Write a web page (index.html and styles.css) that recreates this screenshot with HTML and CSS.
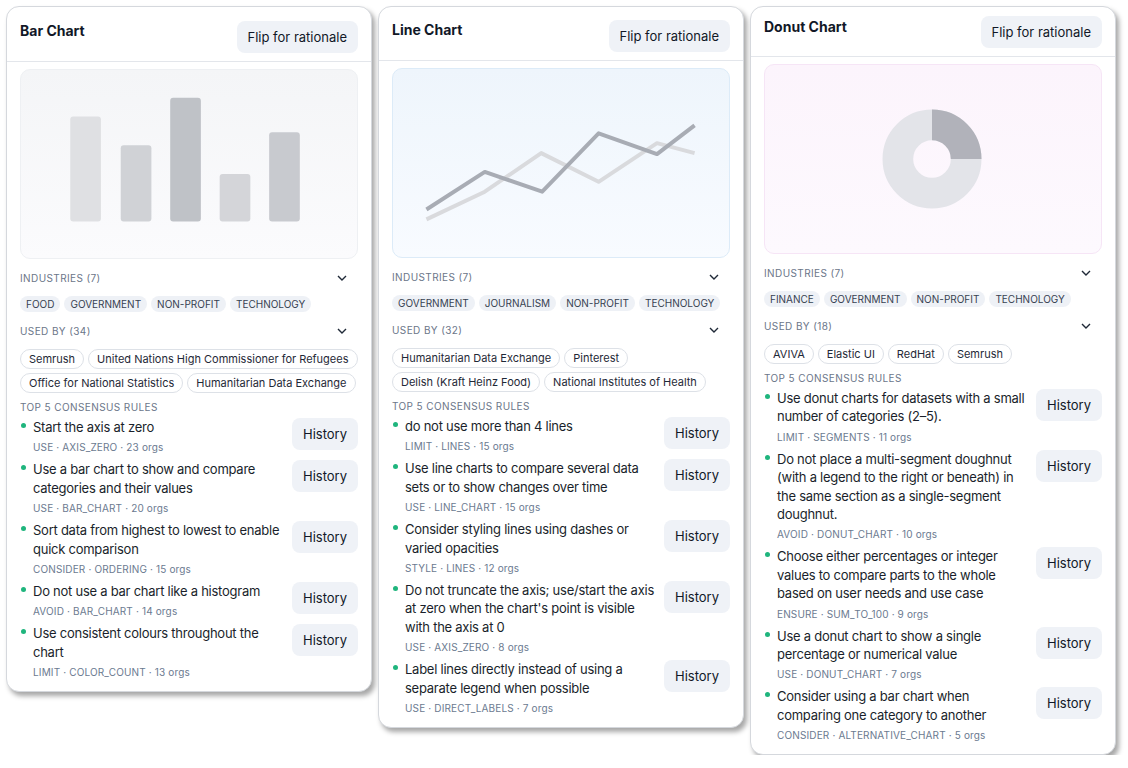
FILE: index.html
```html
<!DOCTYPE html>
<html lang="en">
<head>
    <meta charset="UTF-8">
    <meta name="viewport" content="width=device-width, initial-scale=1.0">
    <title>Chart Guidelines</title>
    <link rel="stylesheet" href="styles.css">
</head>
<body>
    <main class="deck">

        <!-- Bar chart -->
        <article class="card">
            <header class="card-head">
                <h2>Bar Chart</h2>
                <button class="btn-soft">Flip for rationale</button>
            </header>
            <div class="card-body">
                <div class="preview preview-bar">
                    <svg viewBox="0 0 338 190">
                        <rect x="49" y="47" width="31" height="106" rx="3" fill="#dfe0e3"/>
                        <rect x="100" y="76" width="31" height="77" rx="3" fill="#d0d2d6"/>
                        <rect x="150" y="28" width="31" height="125" rx="3" fill="#bfc2c7"/>
                        <rect x="200" y="105" width="31" height="48" rx="3" fill="#d4d5d9"/>
                        <rect x="250" y="63" width="31" height="90" rx="3" fill="#c8cacf"/>
                    </svg>
                </div>

                <div class="section-row">
                    <span class="label">Industries (7)</span>
                    <svg class="chevron" viewBox="0 0 10 6"><path d="M1 1l4 4 4-4"/></svg>
                </div>
                <div class="tags">
                    <span class="tag">Food</span>
                    <span class="tag">Government</span>
                    <span class="tag">Non-profit</span>
                    <span class="tag">Technology</span>
                </div>

                <div class="section-row">
                    <span class="label">Used by (34)</span>
                    <svg class="chevron" viewBox="0 0 10 6"><path d="M1 1l4 4 4-4"/></svg>
                </div>
                <div class="orgs">
                    <span class="org">Semrush</span>
                    <span class="org">United Nations High Commissioner for Refugees</span>
                    <span class="org">Office for National Statistics</span>
                    <span class="org">Humanitarian Data Exchange</span>
                </div>

                <div class="label rules-title">Top 5 consensus rules</div>
                <ul class="rules">
                    <li class="rule">
                        <div class="rule-main">
                            <p class="rule-text">Start the axis at zero</p>
                            <p class="rule-meta">USE · AXIS_ZERO · 23 orgs</p>
                        </div>
                        <button class="btn-soft">History</button>
                    </li>
                    <li class="rule">
                        <div class="rule-main">
                            <p class="rule-text">Use a bar chart to show and compare categories and their values</p>
                            <p class="rule-meta">USE · BAR_CHART · 20 orgs</p>
                        </div>
                        <button class="btn-soft">History</button>
                    </li>
                    <li class="rule">
                        <div class="rule-main">
                            <p class="rule-text">Sort data from highest to lowest to enable quick comparison</p>
                            <p class="rule-meta">CONSIDER · ORDERING · 15 orgs</p>
                        </div>
                        <button class="btn-soft">History</button>
                    </li>
                    <li class="rule">
                        <div class="rule-main">
                            <p class="rule-text">Do not use a bar chart like a histogram</p>
                            <p class="rule-meta">AVOID · BAR_CHART · 14 orgs</p>
                        </div>
                        <button class="btn-soft">History</button>
                    </li>
                    <li class="rule">
                        <div class="rule-main">
                            <p class="rule-text">Use consistent colours throughout the chart</p>
                            <p class="rule-meta">LIMIT · COLOR_COUNT · 13 orgs</p>
                        </div>
                        <button class="btn-soft">History</button>
                    </li>
                </ul>
            </div>
        </article>

        <!-- Line chart -->
        <article class="card">
            <header class="card-head card-head-mid">
                <h2>Line Chart</h2>
                <button class="btn-soft">Flip for rationale</button>
            </header>
            <div class="card-body">
                <div class="preview preview-line">
                    <svg viewBox="0 0 338 190">
                        <polyline class="line-light" points="33,152 92,124 149,85 207,114 266,75 304,85"/>
                        <polyline class="line-dark" points="33,142 92,104 150,124 207,65 266,86 304,57"/>
                    </svg>
                </div>

                <div class="section-row">
                    <span class="label">Industries (7)</span>
                    <svg class="chevron" viewBox="0 0 10 6"><path d="M1 1l4 4 4-4"/></svg>
                </div>
                <div class="tags">
                    <span class="tag">Government</span>
                    <span class="tag">Journalism</span>
                    <span class="tag">Non-profit</span>
                    <span class="tag">Technology</span>
                </div>

                <div class="section-row">
                    <span class="label">Used by (32)</span>
                    <svg class="chevron" viewBox="0 0 10 6"><path d="M1 1l4 4 4-4"/></svg>
                </div>
                <div class="orgs">
                    <span class="org">Humanitarian Data Exchange</span>
                    <span class="org">Pinterest</span>
                    <span class="org">Delish (Kraft Heinz Food)</span>
                    <span class="org">National Institutes of Health</span>
                </div>

                <div class="label rules-title">Top 5 consensus rules</div>
                <ul class="rules">
                    <li class="rule">
                        <div class="rule-main">
                            <p class="rule-text">do not use more than 4 lines</p>
                            <p class="rule-meta">LIMIT · LINES · 15 orgs</p>
                        </div>
                        <button class="btn-soft">History</button>
                    </li>
                    <li class="rule">
                        <div class="rule-main">
                            <p class="rule-text">Use line charts to compare several data sets or to show changes over time</p>
                            <p class="rule-meta">USE · LINE_CHART · 15 orgs</p>
                        </div>
                        <button class="btn-soft">History</button>
                    </li>
                    <li class="rule">
                        <div class="rule-main">
                            <p class="rule-text">Consider styling lines using dashes or varied opacities</p>
                            <p class="rule-meta">STYLE · LINES · 12 orgs</p>
                        </div>
                        <button class="btn-soft">History</button>
                    </li>
                    <li class="rule">
                        <div class="rule-main">
                            <p class="rule-text">Do not truncate the axis; use/start the axis at zero when the chart's point is visible with the axis at 0</p>
                            <p class="rule-meta">USE · AXIS_ZERO · 8 orgs</p>
                        </div>
                        <button class="btn-soft">History</button>
                    </li>
                    <li class="rule">
                        <div class="rule-main">
                            <p class="rule-text">Label lines directly instead of using a separate legend when possible</p>
                            <p class="rule-meta">USE · DIRECT_LABELS · 7 orgs</p>
                        </div>
                        <button class="btn-soft">History</button>
                    </li>
                </ul>
            </div>
        </article>

        <!-- Donut chart -->
        <article class="card">
            <header class="card-head card-head-tight">
                <h2>Donut Chart</h2>
                <button class="btn-soft">Flip for rationale</button>
            </header>
            <div class="card-body">
                <div class="preview preview-donut">
                    <svg viewBox="0 0 338 190">
                        <circle cx="168" cy="95" r="34.5" fill="none" stroke="#e3e4e9" stroke-width="31"/>
                        <circle cx="168" cy="95" r="34.5" fill="none" stroke="#b1b2ba" stroke-width="31"
                                stroke-dasharray="54.2 216.8" transform="rotate(-90 168 95)"/>
                    </svg>
                </div>

                <div class="section-row">
                    <span class="label">Industries (7)</span>
                    <svg class="chevron" viewBox="0 0 10 6"><path d="M1 1l4 4 4-4"/></svg>
                </div>
                <div class="tags">
                    <span class="tag">Finance</span>
                    <span class="tag">Government</span>
                    <span class="tag">Non-profit</span>
                    <span class="tag">Technology</span>
                </div>

                <div class="section-row">
                    <span class="label">Used by (18)</span>
                    <svg class="chevron" viewBox="0 0 10 6"><path d="M1 1l4 4 4-4"/></svg>
                </div>
                <div class="orgs">
                    <span class="org">AVIVA</span>
                    <span class="org">Elastic UI</span>
                    <span class="org">RedHat</span>
                    <span class="org">Semrush</span>
                </div>

                <div class="label rules-title">Top 5 consensus rules</div>
                <ul class="rules">
                    <li class="rule">
                        <div class="rule-main">
                            <p class="rule-text">Use donut charts for datasets with a small number of categories (2–5).</p>
                            <p class="rule-meta">LIMIT · SEGMENTS · 11 orgs</p>
                        </div>
                        <button class="btn-soft">History</button>
                    </li>
                    <li class="rule">
                        <div class="rule-main">
                            <p class="rule-text">Do not place a multi-segment doughnut (with a legend to the right or beneath) in the same section as a single-segment doughnut.</p>
                            <p class="rule-meta">AVOID · DONUT_CHART · 10 orgs</p>
                        </div>
                        <button class="btn-soft">History</button>
                    </li>
                    <li class="rule">
                        <div class="rule-main">
                            <p class="rule-text">Choose either percentages or integer values to compare parts to the whole based on user needs and use case</p>
                            <p class="rule-meta">ENSURE · SUM_TO_100 · 9 orgs</p>
                        </div>
                        <button class="btn-soft">History</button>
                    </li>
                    <li class="rule">
                        <div class="rule-main">
                            <p class="rule-text">Use a donut chart to show a single percentage or numerical value</p>
                            <p class="rule-meta">USE · DONUT_CHART · 7 orgs</p>
                        </div>
                        <button class="btn-soft">History</button>
                    </li>
                    <li class="rule">
                        <div class="rule-main">
                            <p class="rule-text">Consider using a bar chart when comparing one category to another</p>
                            <p class="rule-meta">CONSIDER · ALTERNATIVE_CHART · 5 orgs</p>
                        </div>
                        <button class="btn-soft">History</button>
                    </li>
                </ul>
            </div>
        </article>

    </main>
</body>
</html>
```

FILE: styles.css
```css
* {
    box-sizing: border-box;
}

body {
    margin: 0;
    font-family: 'Inter', 'Liberation Sans', sans-serif;
    color: #111827;
    background: #fff;
}

.deck {
    display: flex;
    align-items: flex-start;
    gap: 6px;
    padding: 6px 0 0 6px;
}

.card {
    width: 366px;
    background: #fff;
    border: 1px solid #d5d8dd;
    border-radius: 13px;
    box-shadow: 3px 4px 5px rgba(0, 0, 0, 0.35);
}

.card-head {
    display: flex;
    justify-content: space-between;
    align-items: flex-start;
    padding: 14px 13px 8px;
    border-bottom: 1px solid #e3e6eb;
}

.card-head-mid {
    padding-top: 13px;
}

.card-head-tight {
    padding-top: 9px;
}

.card-head h2 {
    margin: 0;
    font-size: 14px;
    line-height: 20px;
    font-weight: 700;
    color: #111827;
}

.card-head-tight h2 {
    margin-top: 1px;
}

.btn-soft {
    height: 32px;
    padding: 0 11px;
    border: none;
    border-radius: 8px;
    background: #eff2f7;
    font-family: inherit;
    font-size: 13px;
    color: #111827;
    cursor: pointer;
    flex-shrink: 0;
}

.card-body {
    padding: 7px 13px 12px;
}

/* chart thumbnails */
.preview {
    height: 190px;
    border: 1px solid #eef0f3;
    border-radius: 10px;
}

.preview svg {
    display: block;
    width: 100%;
    height: 100%;
}

.preview-bar {
    background: linear-gradient(180deg, #f4f5f7, #fbfbfd);
}

.preview-line {
    background: linear-gradient(180deg, #eef5fc, #f8fbff);
    border-color: #dcebf8;
}

.preview-donut {
    background: linear-gradient(180deg, #fcf4fc, #fdf9fe);
    border-color: #f6e5f6;
}

.line-light,
.line-dark {
    fill: none;
    stroke-width: 4;
    stroke-linejoin: round;
}

.line-light {
    stroke: #d9dadd;
}

.line-dark {
    stroke: #a8acb4;
}

/* sections */
.section-row {
    display: flex;
    justify-content: space-between;
    align-items: center;
    height: 16px;
    margin-top: 11px;
}

.label {
    font-size: 10px;
    letter-spacing: 0.4px;
    text-transform: uppercase;
    color: #6b7689;
}

.chevron {
    width: 10px;
    height: 6px;
    margin-right: 11px;
    fill: none;
    stroke: #1f2937;
    stroke-width: 1.4;
}

.tags {
    display: flex;
    flex-wrap: wrap;
    gap: 4px;
    margin-top: 10px;
}

.tag {
    height: 16px;
    line-height: 16px;
    padding: 0 6px;
    border-radius: 8px;
    background: #eef1f6;
    font-size: 10px;
    text-transform: uppercase;
    color: #374151;
}

.orgs {
    display: flex;
    flex-wrap: wrap;
    gap: 4px;
    margin-top: 10px;
}

.org {
    height: 20px;
    line-height: 18px;
    padding: 0 8px;
    border: 1px solid #dde1e7;
    border-radius: 10px;
    font-size: 11px;
    color: #1f2937;
}

.rules-title {
    margin-top: 7px;
    line-height: 14px;
}

/* rules list */
.rules {
    list-style: none;
    margin: 4px 0 0;
    padding: 0;
}

.rule {
    display: flex;
    align-items: flex-start;
    gap: 6px;
    padding-bottom: 6px;
}

.rule:last-child {
    padding-bottom: 0;
}

.rule-main {
    flex: 1;
    position: relative;
    padding-left: 13px;
}

.rule-main::before {
    content: "";
    position: absolute;
    left: 1px;
    top: 5px;
    width: 5px;
    height: 5px;
    border-radius: 50%;
    background: #1fb57d;
}

.rule-text {
    margin: 0;
    font-size: 13px;
    line-height: 18.4px;
    letter-spacing: -0.25px;
    color: #1a1f2b;
}

.rule-meta {
    margin: 4px 0 0;
    font-size: 10px;
    line-height: 14px;
    letter-spacing: 0.15px;
    color: #6b7a90;
}
```
